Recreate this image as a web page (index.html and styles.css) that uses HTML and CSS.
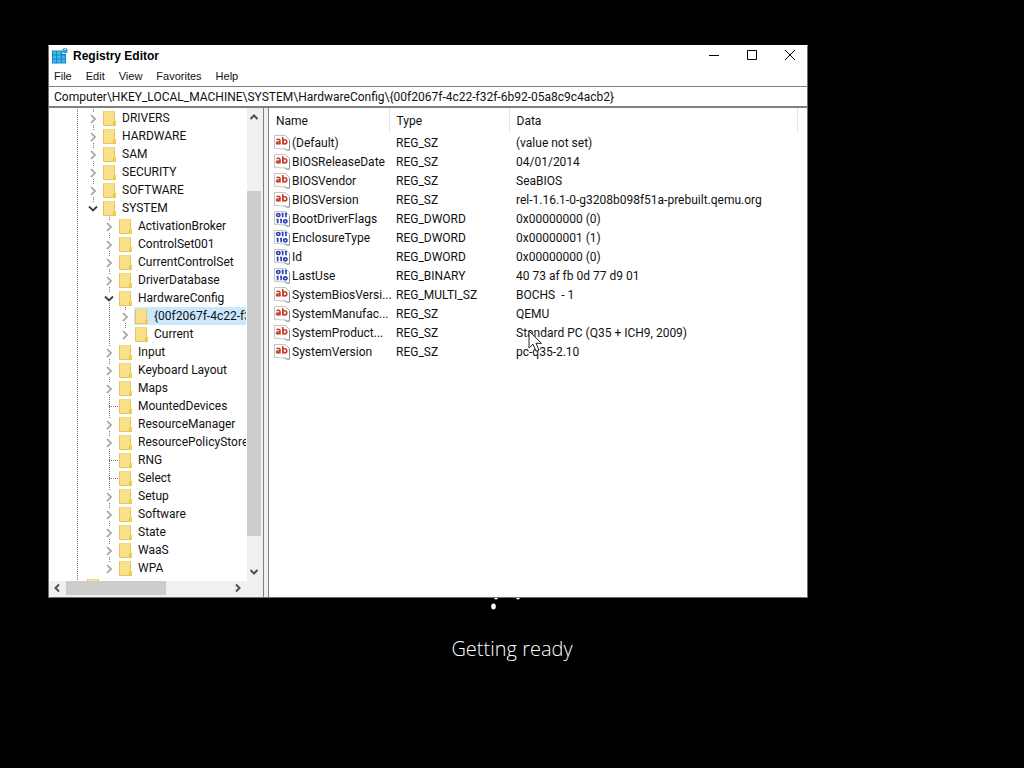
FILE: index.html
```
<!DOCTYPE html>
<html lang="en">
<head>
<meta charset="utf-8">
<title>Registry Editor</title>
<link rel="stylesheet" href="styles.css">
</head>
<body>
<svg class="sprite" aria-hidden="true">
  <symbol id="folder" viewBox="0 0 16 16">
    <path d="M1.500 1h11v9l1.500 1v4.500h-12.500z" fill="#fbe08c"/>
    <path d="M1.500 1v14.500M1.500 15.500H14M12.500 1v9.500l-1 1V15" fill="none" stroke="#e6c558"/>
    <path d="M1.500 1.500h11" stroke="#f2d97c"/>
    <path d="M12 15.500v-4l2-1v5z" fill="#f3cf45"/>
  </symbol>
  <symbol id="closed" viewBox="0 0 16 18"><path d="M4 3h8v13H4z" fill="#fff"/><path d="M5.500 6l4 4-4 4" fill="none" stroke="#a0a0a0" stroke-width="1.700"/></symbol>
  <symbol id="opened" viewBox="0 0 16 18"><path d="M3 4h10v10H3z" fill="#fff"/><path d="M3.500 7.500l4 4 4-4" fill="none" stroke="#404040" stroke-width="1.900"/></symbol>
  <symbol id="page" viewBox="0 0 16 16">
    <path d="M.5.500h11l4 4v10.500c-3 1.200-4-1.800-7-1.200-3 .6-4-1.300-8-.3z" fill="#fff" stroke="#c4c4c4"/>
    <path d="M11.500.500l4 4" fill="none" stroke="#b4b4b4"/>
    <path d="M15.500 5v10c-2.500.8-3.500-.8-5-1.200" fill="none" stroke="#8e8e8e"/>
  </symbol>
  <symbol id="string" viewBox="0 0 16 16">
    <use href="#page"/>
    <g fill="none" stroke="#c8402f" stroke-width="1.600"><path d="M2.500 4.800c1-.8 3.500-.8 3.500 1v3.700M5.800 6.800c-2.300 0-3.300.2-3.300 1.200s2.200 1.400 3.300 0M8.800 2v7.500"/><ellipse cx="10.800" cy="6.800" rx="2" ry="2.100"/></g>
  </symbol>
  <symbol id="binary" viewBox="0 0 16 16">
    <use href="#page"/>
    <g fill="none" stroke="#2f42b8" stroke-width="1.700"><ellipse cx="4.300" cy="4" rx="1.700" ry="1.500"/><path d="M7.500 2.500h1.200v3.800M10.800 2.500h1.200v3.800M2.500 8.500h1.200v3.800M6 8.500h1.200v3.800"/><ellipse cx="11.300" cy="10.300" rx="1.700" ry="1.500"/></g>
  </symbol>
</svg>

<main class="boot">
  <svg class="spinner" viewBox="0 0 60 16" aria-hidden="true"><g fill="#fff"><ellipse cx="11.500" cy="10.500" rx="2.300" ry="3"/><ellipse cx="14" cy="1" rx="2" ry="2.500"/><ellipse cx="36" cy="1" rx="2" ry="2.500"/></g></svg>
  <p class="boot-text">Getting ready</p>
</main>

<section class="window" aria-label="Registry Editor">
  <header class="titlebar">
    <svg class="app-icon" viewBox="0 0 16 16" aria-hidden="true">
      <path d="M0 2.500h10.500v3.500h3.500v9.500H0z" fill="#1683c4"/>
      <path d="M1 3.500h3v3H1zM5 3.500h4v3H5zM1 7.500h3v3H1zM5 7.500h4v3H5zM10 7.500h3v3h-3zM1 11.500h3v3H1zM5 11.500h4v3H5zM10 11.500h3v3h-3z" fill="#3fb9ee"/>
      <path d="M13 0l2.500 1v3.300L13 5.500l-2.500-1.200V1z" fill="#3595c4"/><path d="M13 .8l1.500.7-1.500.9-1.500-.9z" fill="#b6e7fa"/>
    </svg>
    <h1 class="title">Registry Editor</h1>
    <div class="controls">
      <button class="control" aria-label="Minimize"><svg viewBox="0 0 12 12"><path d="M1 6.500h10"/></svg></button>
      <button class="control" aria-label="Maximize"><svg viewBox="0 0 12 12"><path d="M1.500 1.500h9v9h-9z"/></svg></button>
      <button class="control" aria-label="Close"><svg viewBox="0 0 12 12"><path d="M1 1l10 10M11 1L1 11"/></svg></button>
    </div>
  </header>
  <nav class="menu" aria-label="Menu bar">
    <button>File</button><button>Edit</button><button>View</button><button>Favorites</button><button>Help</button>
  </nav>
  <input class="address" aria-label="Address" value="Computer\HKEY_LOCAL_MACHINE\SYSTEM\HardwareConfig\{00f2067f-4c22-f32f-6b92-05a8c9c4acb2}">
  <div class="panes">
    <div class="tree-pane">
      <div class="tree-view">
        <ul class="tree">
          <li>
            <ul>
              <li><div class="node"><svg class="exp"><use href="#closed"/></svg><svg class="ico"><use href="#folder"/></svg><span>DRIVERS</span></div></li>
              <li><div class="node"><svg class="exp"><use href="#closed"/></svg><svg class="ico"><use href="#folder"/></svg><span>HARDWARE</span></div></li>
              <li><div class="node"><svg class="exp"><use href="#closed"/></svg><svg class="ico"><use href="#folder"/></svg><span>SAM</span></div></li>
              <li><div class="node"><svg class="exp"><use href="#closed"/></svg><svg class="ico"><use href="#folder"/></svg><span>SECURITY</span></div></li>
              <li><div class="node"><svg class="exp"><use href="#closed"/></svg><svg class="ico"><use href="#folder"/></svg><span>SOFTWARE</span></div></li>
              <li><div class="node"><svg class="exp"><use href="#opened"/></svg><svg class="ico"><use href="#folder"/></svg><span>SYSTEM</span></div>
                <ul>
                  <li><div class="node"><svg class="exp"><use href="#closed"/></svg><svg class="ico"><use href="#folder"/></svg><span>ActivationBroker</span></div></li>
                  <li><div class="node"><svg class="exp"><use href="#closed"/></svg><svg class="ico"><use href="#folder"/></svg><span>ControlSet001</span></div></li>
                  <li><div class="node"><svg class="exp"><use href="#closed"/></svg><svg class="ico"><use href="#folder"/></svg><span>CurrentControlSet</span></div></li>
                  <li><div class="node"><svg class="exp"><use href="#closed"/></svg><svg class="ico"><use href="#folder"/></svg><span>DriverDatabase</span></div></li>
                  <li><div class="node"><svg class="exp"><use href="#opened"/></svg><svg class="ico"><use href="#folder"/></svg><span>HardwareConfig</span></div>
                    <ul>
                      <li><div class="node"><svg class="exp"><use href="#closed"/></svg><div class="selected"><svg class="ico"><use href="#folder"/></svg><span>{00f2067f-4c22-f32f-6b92-05a8c9c4acb2}</span></div></div></li>
                      <li><div class="node"><svg class="exp"><use href="#closed"/></svg><svg class="ico"><use href="#folder"/></svg><span>Current</span></div></li>
                    </ul>
                  </li>
                  <li><div class="node"><svg class="exp"><use href="#closed"/></svg><svg class="ico"><use href="#folder"/></svg><span>Input</span></div></li>
                  <li><div class="node"><svg class="exp"><use href="#closed"/></svg><svg class="ico"><use href="#folder"/></svg><span>Keyboard Layout</span></div></li>
                  <li><div class="node"><svg class="exp"><use href="#closed"/></svg><svg class="ico"><use href="#folder"/></svg><span>Maps</span></div></li>
                  <li><div class="node"><i class="leaf"></i><svg class="ico"><use href="#folder"/></svg><span>MountedDevices</span></div></li>
                  <li><div class="node"><svg class="exp"><use href="#closed"/></svg><svg class="ico"><use href="#folder"/></svg><span>ResourceManager</span></div></li>
                  <li><div class="node"><svg class="exp"><use href="#closed"/></svg><svg class="ico"><use href="#folder"/></svg><span>ResourcePolicyStore</span></div></li>
                  <li><div class="node"><i class="leaf"></i><svg class="ico"><use href="#folder"/></svg><span>RNG</span></div></li>
                  <li><div class="node"><i class="leaf"></i><svg class="ico"><use href="#folder"/></svg><span>Select</span></div></li>
                  <li><div class="node"><svg class="exp"><use href="#closed"/></svg><svg class="ico"><use href="#folder"/></svg><span>Setup</span></div></li>
                  <li><div class="node"><svg class="exp"><use href="#closed"/></svg><svg class="ico"><use href="#folder"/></svg><span>Software</span></div></li>
                  <li><div class="node"><svg class="exp"><use href="#closed"/></svg><svg class="ico"><use href="#folder"/></svg><span>State</span></div></li>
                  <li><div class="node"><svg class="exp"><use href="#closed"/></svg><svg class="ico"><use href="#folder"/></svg><span>WaaS</span></div></li>
                  <li><div class="node"><svg class="exp"><use href="#closed"/></svg><svg class="ico"><use href="#folder"/></svg><span>WPA</span></div></li>
                </ul>
              </li>
            </ul>
          </li>
          <li><div class="node"><svg class="exp"><use href="#closed"/></svg><svg class="ico"><use href="#folder"/></svg></div></li>
        </ul>
      </div>
      <div class="vscroll">
        <button aria-label="Scroll up"><svg viewBox="0 0 16 16"><path d="M3.500 11L7 7.500l3.500 3.500"/></svg></button>
        <div class="vthumb"></div>
        <button aria-label="Scroll down"><svg viewBox="0 0 16 16"><path d="M3.500 5L7 8.500 10.500 5"/></svg></button>
      </div>
      <div class="hscroll">
        <button aria-label="Scroll left"><svg viewBox="0 0 16 16"><path d="M9 3.500L5.500 7l3.500 3.500"/></svg></button>
        <div class="hthumb"></div>
        <button aria-label="Scroll right"><svg viewBox="0 0 16 16"><path d="M5 3.500L8.500 7 5 10.500"/></svg></button>
      </div>
    </div>
    <div class="list-pane">
      <table class="values">
        <colgroup><col class="c-name"><col class="c-type"><col class="c-data"><col></colgroup>
        <thead><tr><th>Name</th><th>Type</th><th>Data</th><td></td></tr></thead>
        <tbody>
          <tr><td><div class="name"><svg class="ico"><use href="#string"/></svg><span>(Default)</span></div></td><td>REG_SZ</td><td>(value not set)</td></tr>
          <tr><td><div class="name"><svg class="ico"><use href="#string"/></svg><span>BIOSReleaseDate</span></div></td><td>REG_SZ</td><td>04/01/2014</td></tr>
          <tr><td><div class="name"><svg class="ico"><use href="#string"/></svg><span>BIOSVendor</span></div></td><td>REG_SZ</td><td>SeaBIOS</td></tr>
          <tr><td><div class="name"><svg class="ico"><use href="#string"/></svg><span>BIOSVersion</span></div></td><td>REG_SZ</td><td>rel-1.16.1-0-g3208b098f51a-prebuilt.qemu.org</td></tr>
          <tr><td><div class="name"><svg class="ico"><use href="#binary"/></svg><span>BootDriverFlags</span></div></td><td>REG_DWORD</td><td>0x00000000 (0)</td></tr>
          <tr><td><div class="name"><svg class="ico"><use href="#binary"/></svg><span>EnclosureType</span></div></td><td>REG_DWORD</td><td>0x00000001 (1)</td></tr>
          <tr><td><div class="name"><svg class="ico"><use href="#binary"/></svg><span>Id</span></div></td><td>REG_DWORD</td><td>0x00000000 (0)</td></tr>
          <tr><td><div class="name"><svg class="ico"><use href="#binary"/></svg><span>LastUse</span></div></td><td>REG_BINARY</td><td>40 73 af fb 0d 77 d9 01</td></tr>
          <tr><td><div class="name"><svg class="ico"><use href="#string"/></svg><span>SystemBiosVersi...</span></div></td><td>REG_MULTI_SZ</td><td>BOCHS&nbsp; - 1</td></tr>
          <tr><td><div class="name"><svg class="ico"><use href="#string"/></svg><span>SystemManufac...</span></div></td><td>REG_SZ</td><td>QEMU</td></tr>
          <tr><td><div class="name"><svg class="ico"><use href="#string"/></svg><span>SystemProduct...</span></div></td><td>REG_SZ</td><td>Standard PC (Q35 + ICH9, 2009)</td></tr>
          <tr><td><div class="name"><svg class="ico"><use href="#string"/></svg><span>SystemVersion</span></div></td><td>REG_SZ</td><td>pc-q35-2.10</td></tr>
        </tbody>
      </table>
    </div>
  </div>
</section>

<svg class="pointer" viewBox="0 0 14 22" aria-hidden="true"><path d="M1 1v17l4-3.800 3 7 3-1.200-3-6.700h5.500z" fill="#fff" stroke="#222"/></svg>
</body>
</html>
```
FILE: styles.css
```
* { box-sizing: border-box; }

body {
  margin: 0;
  min-height: 100vh;
  padding: 45px 216px 170px 48px;
  background: #000;
  color: #111;
  font: 12px/18px Roboto, "Open Sans", sans-serif;
}

button {
  padding: 0;
  border: 0;
  background: none;
  color: inherit;
  font: inherit;
}

svg { display: block; flex: none; }
.sprite { position: absolute; width: 0; height: 0; }

.boot {
  position: absolute;
  inset: auto 0 100px;
  display: flex;
  flex-direction: column;
  align-items: center;
  color: #fff;
}
.spinner { width: 60px; height: 16px; }
.boot-text {
  margin: 18px 0 0;
  font: 300 20px/38px "Open Sans", "Noto Sans", sans-serif;
}

.window {
  position: relative;
  display: flex;
  flex-direction: column;
  height: calc(100vh - 215px);
  border: 1px solid #707070;
  border-top-color: #fff;
  background: #fff;
}

.titlebar {
  display: flex;
  align-items: flex-start;
  height: 21px;
  padding-left: 3px;
}
.app-icon { width: 16px; height: 16px; margin-top: 2px; }
.title {
  flex: 1;
  margin: 0 0 0 5px;
  font: bold 12px/20px "Liberation Sans", Arial, sans-serif;
  color: #000;
}
.controls { display: flex; }
.control {
  display: grid;
  place-items: center;
  width: 38px;
  height: 18px;
  padding-left: 4px;
}
.control svg { width: 12px; height: 12px; fill: none; stroke: #000; }

.menu {
  display: flex;
  gap: 14px;
  height: 19px;
  padding-left: 5px;
  font: 11px/16px "Liberation Sans", Arial, sans-serif;
}
.menu button { height: 17px; }

.address {
  width: 100%;
  height: 22px;
  padding: 0 5px;
  border: solid #808080;
  border-width: 1px 0 2px;
  outline: 0;
  background: #fff;
  color: #111;
  font: inherit;
}

.panes { display: flex; flex: 1; min-height: 0; background: #f0f0f0; }
.tree-pane {
  display: grid;
  grid-template: minmax(0, 1fr) 16px / minmax(0, 1fr) 16px;
  width: 215px;
  border-right: 1px solid #808080;
  background: #f0f0f0;
}
.tree-view { overflow: hidden; border-right: 1px solid #fff; background: #fff; }
.tree-view ul { margin: 0; padding: 0 0 0 16px; list-style: none; }
.tree-view .tree { padding: 1px 0 0 20px; }
.tree-view li {
  background: repeating-linear-gradient(#777 0 1px, transparent 1px 2px) 8px 0 / 1px 100% no-repeat;
}
.tree-view ul ul li:last-child { background-size: 1px 9px; }
.node { display: flex; align-items: center; height: 18px; white-space: nowrap; }
.exp { width: 17px; height: 18px; }
.ico { width: 16px; height: 16px; }
.node span { margin-left: 4px; }
.leaf {
  width: 9px;
  height: 1px;
  margin-left: 8px;
  background: repeating-linear-gradient(90deg, #777 0 1px, transparent 1px 2px);
}
.selected { display: flex; align-items: center; height: 18px; background: #cce8ff; }

.vscroll { display: flex; flex-direction: column; }
.vscroll button, .hscroll button { width: 16px; height: 16px; }
.vscroll svg, .hscroll svg { width: 16px; height: 16px; fill: none; stroke: #505050; stroke-width: 2; }
.vscroll button:last-child { margin-top: auto; }
.vthumb { width: 14px; height: 73%; margin-top: 67px; background: #cdcdcd; }
.hscroll { display: flex; padding-left: 1px; }
.hscroll button:last-child { margin-left: auto; }
.hthumb { width: 100px; height: 14px; background: #cdcdcd; }

.list-pane {
  flex: 1;
  min-width: 0;
  margin-left: 4px;
  border-left: 1px solid #808080;
  background: #fff;
  overflow: hidden;
}
.values { width: 100%; border-collapse: collapse; table-layout: fixed; }
.c-name { width: 120px; }
.c-type { width: 120px; }
.c-data { width: 288px; }
.values th {
  height: 25px;
  padding: 0 7px;
  border-right: 1px solid #e5e5e5;
  font-weight: normal;
  text-align: left;
}
.values td { height: 19px; padding: 0 7px; white-space: nowrap; }
.values td:first-child { padding: 0 0 0 5px; }
.name { display: flex; align-items: center; gap: 2px; }

.pointer { position: absolute; left: 528px; top: 330px; width: 14px; height: 22px; }
```
